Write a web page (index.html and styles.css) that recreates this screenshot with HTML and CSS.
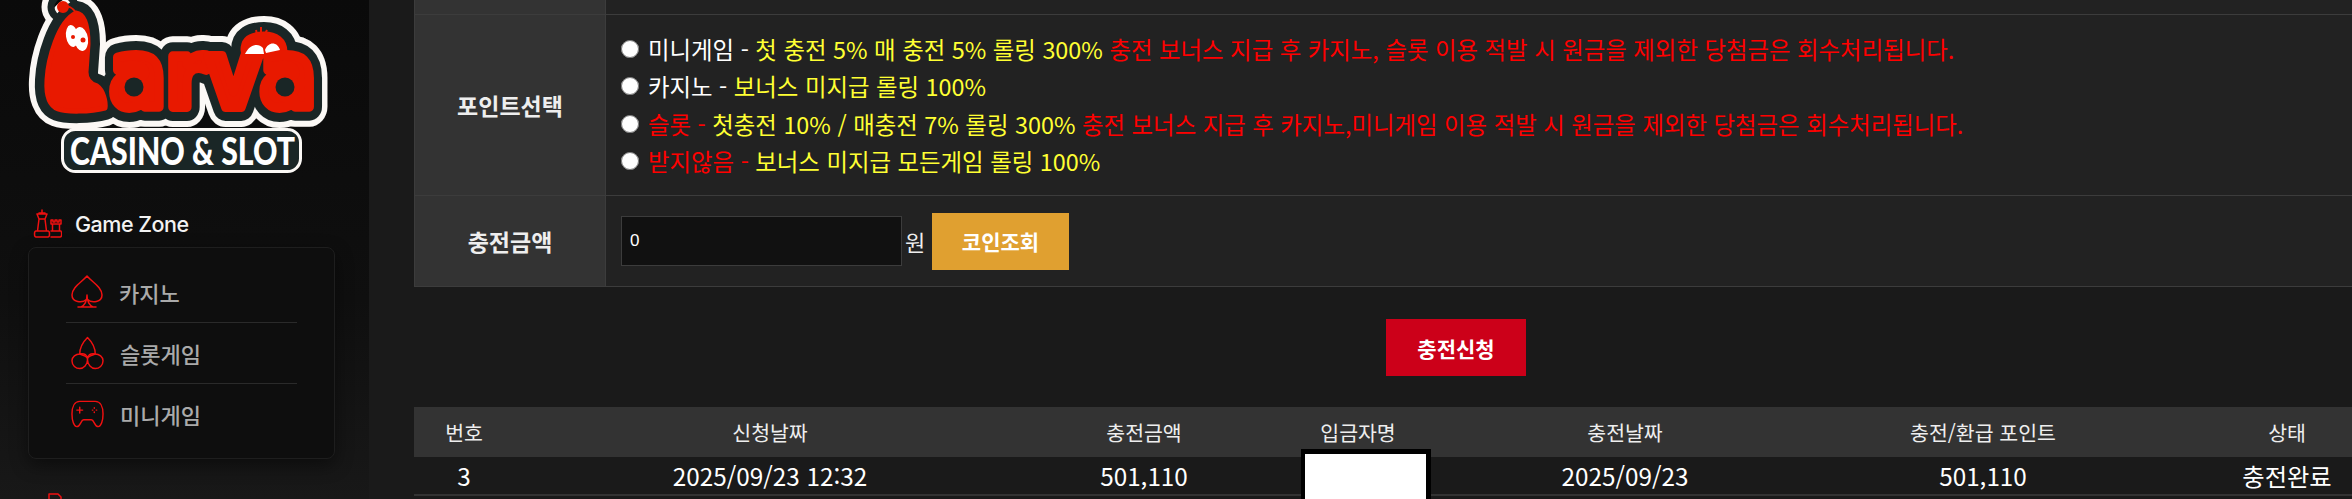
FILE: index.html
```html
<!DOCTYPE html>
<html lang="ko">
<head>
    <meta charset="UTF-8">
    <title>충전신청</title>
    <link rel="stylesheet" href="styles.css">
</head>
<body>
    <div class="page">
        <aside class="sidebar">
            <svg class="logo" viewBox="0 0 369 190" width="369" height="190">
                <defs>
                    <g id="logo-shape">
                        <path d="M243 50C243 38 252 34 264 34C276 34 285 40 285 52C285 55 284 58 283 60C270 52 256 56 250 62C246 58 243 54 243 50Z"/>
                        <path d="M76 13C84 14 88 26 88 44L86 72C86 80 90 84 97 86C103 90 106 102 105 108C90 112 66 112 58 109C50 106 46 96 47 80C48 60 58 22 76 13Z"/>
                        <circle cx="63" cy="7" r="3.500"/>
                        <text class="word" x="110" y="107" textLength="206" lengthAdjust="spacingAndGlyphs">arva</text>
                    </g>
                </defs>
                <use class="logo-white" href="#logo-shape"/>
                <use class="logo-dark" href="#logo-shape"/>
                <use class="logo-red" href="#logo-shape"/>
                <path class="antenna" d="M63 7C68 5 73 8 76 13"/>
                <circle class="logo-hole" cx="134" cy="87" r="9.500"/>
                <circle class="logo-hole" cx="285" cy="87" r="9.500"/>
                <ellipse class="eye" cx="72" cy="36" rx="6" ry="11" transform="rotate(-8 72 36)"/>
                <ellipse class="eye" cx="81" cy="39" rx="7" ry="12" transform="rotate(-8 81 39)"/>
                <circle class="pupil" cx="73" cy="37" r="2"/>
                <circle class="pupil" cx="83" cy="40" r="2.500"/>
                <path class="crest" d="M261 34V27M257 34L256 30M265 34L267 30"/>
                <path class="eye" d="M245 54C249 45 258 42 263 48L264 54ZM265 50C268 42 277 41 280 50L266 53Z"/>
                <rect class="pill" x="62.500" y="129.500" width="238" height="42" rx="13"/>
                <text class="pill-text" x="70" y="165" textLength="225" lengthAdjust="spacingAndGlyphs">CASINO &amp; SLOT</text>
            </svg>
            <div class="zone-title">
                <svg class="zone-icon" viewBox="0 0 30 30" width="30" height="30">
                    <path d="M10 1v3M7 4h6M5 5h10l-2 5H7zM7 10L5.500 22h9L13 10M4 22h12c2 0 2 6 0 6H4c-2 0-2-6 0-6zM19 15v-4h2v2h2v-2h2v2h2v-2h2v4zM20.500 15v7h7v-7M19 22h10c1 2 1 6-1 6H19"/>
                </svg>
                <span>Game Zone</span>
            </div>
            <nav class="zone-panel">
                <a class="zone-item">
                    <svg class="item-icon" viewBox="0 0 32 34" width="32" height="34">
                        <path d="M16 1C11 7 1 12 1 20c0 7 10 9 15 4 5 5 15 3 15-4C31 12 21 7 16 1zM16 20c0 5-2 10-6 12h12c-4-2-6-7-6-12zM7 32h18"/>
                    </svg>
                    <span>카지노</span>
                </a>
                <a class="zone-item">
                    <svg class="item-icon" viewBox="0 0 34 34" width="33" height="34">
                        <path d="M17 24c0-5-3-7-8-6-4 0-8 3-8 7 0 5 4 8 8 8s8-4 8-9zM17 24c0-5 3-7 8-6 4 0 8 3 8 7 0 5-4 8-8 8s-8-4-8-9z"/>
                        <path d="M17 1C12 6 9 12 9 18M17 1c5 5 8 11 8 17M9 18c3 1 6 2 8 4 2-2 5-3 8-4"/>
                    </svg>
                    <span>슬롯게임</span>
                </a>
                <a class="zone-item">
                    <svg class="item-icon" viewBox="0 0 34 28" width="33" height="28">
                        <path d="M9 1h16c5 0 8 5 8 13 0 7-2 13-5 13-4 0-4-7-7-7H13c-3 0-3 7-7 7-3 0-5-6-5-13C1 6 4 1 9 1z"/>
                        <path d="M6 10h6M9 7v6M22 10h.5M26 10h.5M24 7.500v.5M24 12v.5"/>
                    </svg>
                    <span>미니게임</span>
                </a>
            </nav>
            <svg class="next-icon" viewBox="0 0 14 6" width="14" height="6"><path d="M1 6V1h9l3 3v2"/></svg>
        </aside>
        <main class="main">
            <div class="form-table">
                <div class="form-label form-top"></div>
                <div class="form-value form-top"></div>
                <div class="form-label">포인트선택</div>
                <div class="form-value options">
                    <label class="option">
                        <input type="radio" name="point">
                        <span class="white">미니게임 - </span><span class="yellow">첫 충전 5% 매 충전 5% 롤링 300% </span><span class="red">충전 보너스 지급 후 카지노, 슬롯 이용 적발 시 원금을 제외한 당첨금은 회수처리됩니다.</span>
                    </label>
                    <label class="option">
                        <input type="radio" name="point">
                        <span class="white">카지노 - </span><span class="yellow">보너스 미지급 롤링 100%</span>
                    </label>
                    <label class="option">
                        <input type="radio" name="point">
                        <span class="red">슬롯 - </span><span class="yellow">첫충전 10% / 매충전 7% 롤링 300% </span><span class="red">충전 보너스 지급 후 카지노,미니게임 이용 적발 시 원금을 제외한 당첨금은 회수처리됩니다.</span>
                    </label>
                    <label class="option">
                        <input type="radio" name="point">
                        <span class="red">받지않음 - </span><span class="yellow">보너스 미지급 모든게임 롤링 100%</span>
                    </label>
                </div>
                <div class="form-label form-last">충전금액</div>
                <div class="form-value form-last amount">
                    <input class="amount-input" type="text" value="0">
                    <span class="won">원</span>
                    <button class="coin-btn">코인조회</button>
                </div>
            </div>
            <div class="submit-row">
                <button class="submit-btn">충전신청</button>
            </div>
            <div class="history">
                <div class="history-row history-head">
                    <span>번호</span><span>신청날짜</span><span>충전금액</span><span>입금자명</span><span>충전날짜</span><span>충전/환급 포인트</span><span>상태</span>
                </div>
                <div class="history-row history-body">
                    <span>3</span><span>2025/09/23 12:32</span><span>501,110</span><span></span><span>2025/09/23</span><span>501,110</span><span>충전완료</span>
                </div>
            </div>
            <div class="redact"></div>
        </main>
    </div>
</body>
</html>
```

FILE: styles.css
```css
html, body {
    margin: 0;
    height: 100%;
    overflow: hidden;
    background: #1a1a1a;
}

body {
    font-family: "Noto Sans CJK KR", "Liberation Sans", sans-serif;
    color: #fff;
}

.page {
    display: flex;
    width: 2352px;
    height: 499px;
    overflow: hidden;
}

/* sidebar */
.sidebar {
    flex: 0 0 369px;
    height: 499px;
    background: linear-gradient(#0a0a0a, #0f0f0f 60%, #181818);
    position: relative;
    overflow: hidden;
}

.logo {
    display: block;
    height: 190px;
}

.logo-white, .logo-dark, .logo-red {
    stroke-linejoin: round;
}

.logo-white {
    fill: #fbf8f5;
    stroke: #fbf8f5;
    stroke-width: 36;
    --word-stroke: 40;
}

.logo-dark {
    fill: #1a2626;
    stroke: #1a2626;
    stroke-width: 24;
    --word-stroke: 28;
}

.logo-red {
    fill: #e81900;
    stroke: #e81900;
    stroke-width: 5;
    --word-stroke: 10;
}

.word {
    font-family: "DejaVu Sans", sans-serif;
    font-weight: 700;
    font-size: 92px;
    stroke-width: var(--word-stroke);
}

.antenna {
    fill: none;
    stroke: #e81900;
    stroke-width: 2;
}

.crest {
    fill: none;
    stroke: #e81900;
    stroke-width: 2;
}

.logo-hole {
    fill: #1a2626;
}

.eye {
    fill: #fff;
}

.pupil {
    fill: #e81900;
}

.pill {
    fill: #1a2626;
    stroke: #fbf8f5;
    stroke-width: 3;
}

.pill-text {
    font-family: "Lato", sans-serif;
    font-weight: 900;
    font-size: 37px;
    fill: #fff;
}

.zone-title {
    display: flex;
    align-items: center;
    gap: 13px;
    margin: 19px 0 0 32px;
    height: 30px;
    font-family: "Inter", sans-serif;
    font-size: 21.500px;
    font-weight: 500;
    letter-spacing: -0.5px;
    color: #f2f2f2;
}

.zone-icon, .item-icon, .next-icon {
    fill: none;
    stroke: #f01010;
    stroke-width: 1.500;
    stroke-linejoin: round;
    stroke-linecap: round;
    flex: none;
}

.zone-panel {
    box-sizing: border-box;
    width: 307px;
    height: 212px;
    margin: 8px 0 0 28px;
    padding: 14px 37px 0;
    border: 1px solid #1e1e1e;
    border-radius: 8px;
    background: #0e0e0e;
    box-shadow: 0 6px 18px rgba(0, 0, 0, 0.45);
}

.zone-item {
    display: flex;
    align-items: center;
    gap: 16px;
    height: 60px;
    padding-left: 5px;
    font-size: 22px;
    font-weight: 500;
    color: #aaa;
    border-bottom: 1px solid #2a2a2a;
}

.zone-item:last-child {
    border-bottom: none;
}

.next-icon {
    position: absolute;
    left: 48px;
    bottom: 0;
}

/* main */
.main {
    flex: 1;
    padding-left: 45px;
    position: relative;
    min-width: 0;
}

.form-table {
    display: grid;
    grid-template-columns: 191px 1fr;
    grid-template-rows: 15px 181px 90px;
    border: solid #3c3c3c;
    border-width: 0 0 1px 1px;
}

.form-label {
    display: flex;
    align-items: center;
    justify-content: center;
    background: #333;
    border-right: 1px solid #3c3c3c;
    border-bottom: 1px solid #3c3c3c;
    font-size: 23px;
    font-weight: 700;
    color: #eee;
}

.form-value {
    background: #222;
    border-bottom: 1px solid #3c3c3c;
}

.form-last {
    border-bottom: none;
}

.options {
    display: flex;
    flex-direction: column;
    justify-content: center;
    padding-left: 15px;
    font-size: 23.400px;
}

.option {
    display: flex;
    align-items: center;
    height: 37.500px;
    white-space: pre;
}

.option input {
    width: 18px;
    height: 18px;
    margin: 0 9px 0 0;
    flex: none;
}

.white {
    color: #fff;
}

.yellow {
    color: #ffff33;
}

.red {
    color: #f00;
}

.amount {
    display: flex;
    align-items: center;
    padding-left: 15px;
}

.amount-input {
    box-sizing: border-box;
    width: 281px;
    height: 50px;
    padding: 0 8px;
    background: #111;
    border: 1px solid #3c3c3c;
    color: #fff;
    font: 17px "Liberation Sans", sans-serif;
    outline: none;
}

.won {
    width: 30px;
    padding-left: 3px;
    box-sizing: border-box;
    font-size: 22px;
    color: #eee;
}

.coin-btn {
    width: 137px;
    height: 57px;
    background: #e0a030;
    border: none;
    color: #fff;
    font: 700 21px "Noto Sans CJK KR", sans-serif;
}

.submit-row {
    display: flex;
    justify-content: center;
    padding-top: 32px;
    width: 2084px;
}

.submit-btn {
    width: 140px;
    height: 57px;
    background: #cc0019;
    border: none;
    color: #fff;
    font: 700 21px "Noto Sans CJK KR", sans-serif;
}

.history {
    margin-top: 31px;
    width: 1990px;
}

.history-row {
    display: grid;
    grid-template-columns: 100px 512px 236px 192px 342px 374px 234px;
    justify-items: center;
    align-items: center;
}

.history-head {
    height: 50px;
    background: #333;
    font-size: 20.500px;
    color: #eee;
}

.history-body {
    height: 37px;
    border-bottom: 2px solid #333;
    font-size: 24.300px;
    background: #1a1a1a;
}

.redact {
    position: absolute;
    left: 932px;
    top: 449px;
    width: 121px;
    height: 50px;
    background: #fff;
    border: solid #000;
    border-width: 5px 5px 0 4px;
}
```
